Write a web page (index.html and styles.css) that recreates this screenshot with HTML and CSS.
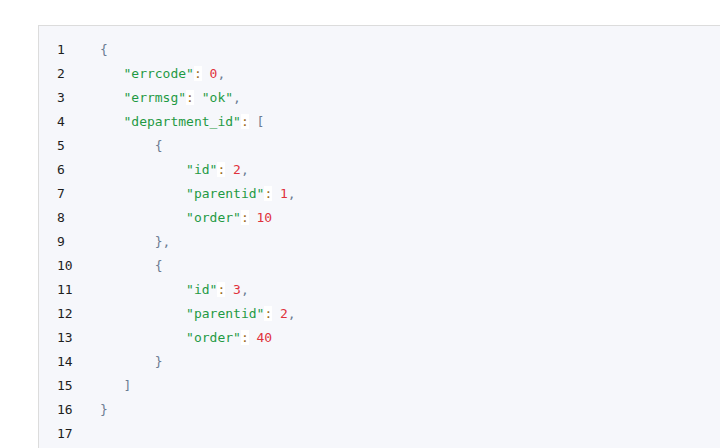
FILE: index.html
```html
<!DOCTYPE html>
<html>
<head>
<meta charset="utf-8">
<link rel="stylesheet" href="styles.css">
</head>
<body>
<div class="code-block">
<div class="gutter"><span>1</span><span>2</span><span>3</span><span>4</span><span>5</span><span>6</span><span>7</span><span>8</span><span>9</span><span>10</span><span>11</span><span>12</span><span>13</span><span>14</span><span>15</span><span>16</span><span>17</span></div>
<pre class="code"><span class="p">{</span>
   <span class="k">"errcode"</span><span class="c">:</span> <span class="n">0</span><span class="p">,</span>
   <span class="k">"errmsg"</span><span class="c">:</span> <span class="k">"ok"</span><span class="p">,</span>
   <span class="k">"department_id"</span><span class="c">:</span> <span class="p">[</span>
       <span class="p">{</span>
           <span class="k">"id"</span><span class="c">:</span> <span class="n">2</span><span class="p">,</span>
           <span class="k">"parentid"</span><span class="c">:</span> <span class="n">1</span><span class="p">,</span>
           <span class="k">"order"</span><span class="c">:</span> <span class="n">10</span>
       <span class="p">},</span>
       <span class="p">{</span>
           <span class="k">"id"</span><span class="c">:</span> <span class="n">3</span><span class="p">,</span>
           <span class="k">"parentid"</span><span class="c">:</span> <span class="n">2</span><span class="p">,</span>
           <span class="k">"order"</span><span class="c">:</span> <span class="n">40</span>
       <span class="p">}</span>
   <span class="p">]</span>
<span class="p">}</span></pre>
</div>
</body>
</html>
```
FILE: styles.css
```css
html, body {
  margin: 0;
  padding: 0;
  background: #ffffff;
  overflow: hidden;
}
body {
  padding: 25px 0 0 38px;
}
.code-block {
  box-sizing: border-box;
  display: flex;
  background: #f6f7fb;
  border-top: 1px solid #dcdcdc;
  border-left: 1px solid #dcdcdc;
  padding-top: 12px;
  height: 423px;
  font-family: "DejaVu Sans Mono", "Liberation Mono", monospace;
  font-size: 13px;
  line-height: 24px;
}
.gutter {
  display: flex;
  flex-direction: column;
  width: 43px;
  padding-left: 18px;
  color: #1e1e1e;
}
.code {
  margin: 0;
  font: inherit;
  color: #555;
}
.k { color: #1f9a44; }
.n { color: #e0323c; }
.p { color: #6b7c93; }
.c { color: #9a6a20; background: #ffffff; }
```
